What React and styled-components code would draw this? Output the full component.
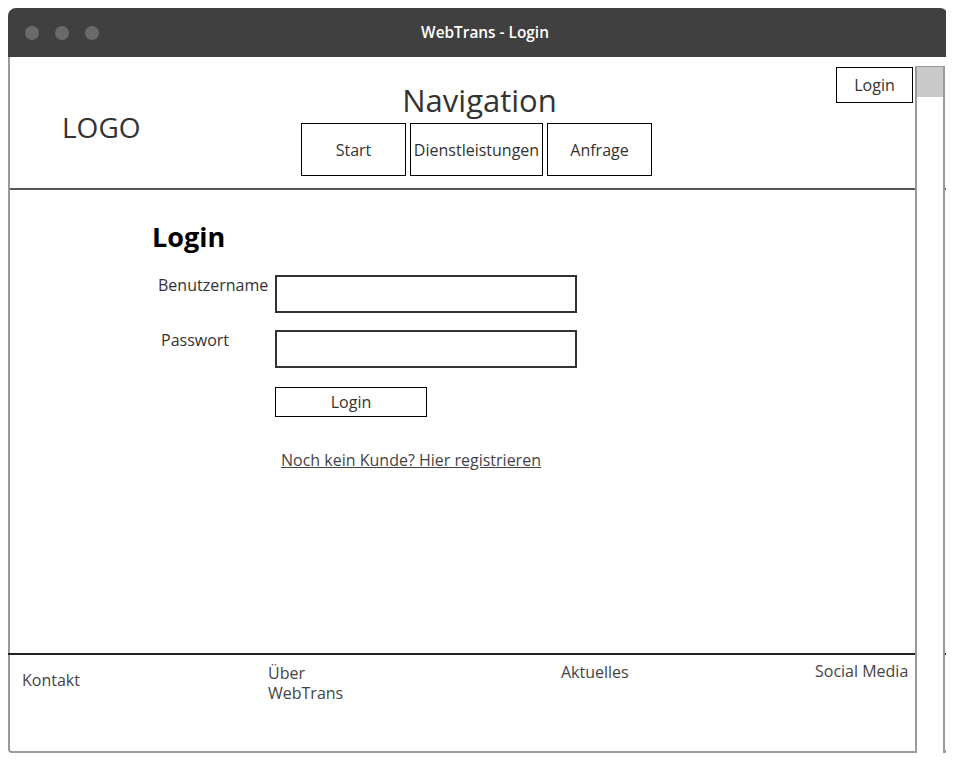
import styled, { createGlobalStyle } from "styled-components";

const GlobalStyle = createGlobalStyle`
  body {
    margin: 8px;
    background: #fff;
    font-family: "Open Sans", "Liberation Sans", sans-serif;
    color: #333;
  }
`;

const Window = styled.div`
  width: 940px;
  height: 745px;
  display: flex;
  flex-direction: column;
`;

const TitleBar = styled.div`
  height: 49px;
  background: #404040;
  border-radius: 8px 8px 0 0;
  display: flex;
  align-items: center;
  position: relative;
`;

const Dots = styled.div`
  display: flex;
  gap: 16px;
  padding-left: 17px;
  position: absolute;
  left: 0;
`;

const Dot = styled.span`
  width: 14px;
  height: 14px;
  border-radius: 50%;
  background: #6a6a6a;
`;

const Title = styled.div`
  flex: 1;
  text-align: center;
  color: #fff;
  font-size: 15.4px;
  font-weight: 600;
  padding-left: 14px;
`;

const Frame = styled.div`
  flex: 1;
  position: relative;
  border: 2px solid #9a9a9a;
  border-top: none;
  border-radius: 0 0 4px 4px;
  display: flex;
  flex-direction: column;
`;

const Header = styled.header`
  height: 131px;
  border-bottom: 2px solid #555;
  display: grid;
  grid-template-columns: 291px 351px 1fr;
`;

const Logo = styled.div`
  font-size: 28px;
  padding-left: 52px;
  padding-top: 8px;
  display: flex;
  align-items: center;
  color: #333;
`;

const NavArea = styled.nav`
  display: flex;
  flex-direction: column;
  align-items: center;
  padding-top: 23px;
`;

const NavTitle = styled.div`
  font-size: 31px;
  line-height: 40px;
  padding-left: 6px;
  color: #333;
`;

const NavButtons = styled.div`
  display: flex;
  gap: 4px;
  margin-top: 3px;
`;

const NavButton = styled.div`
  width: ${(p) => p.$w}px;
  height: 53px;
  box-sizing: border-box;
  border: 1px solid #000;
  display: flex;
  align-items: center;
  justify-content: center;
  font-size: 16px;
  color: #333;
  white-space: nowrap;
`;

const TopRight = styled.div`
  display: flex;
  justify-content: flex-end;
  align-items: flex-start;
  padding: 10px 33px 0 0;
`;

const TopLogin = styled.div`
  width: 77px;
  height: 36px;
  box-sizing: border-box;
  border: 1px solid #000;
  display: flex;
  align-items: center;
  justify-content: center;
  font-size: 16px;
  color: #333;
`;

const Main = styled.main`
  flex: 1;
  padding: 30px 0 0 142px;
`;

const Heading = styled.h1`
  margin: 0;
  font-size: 27px;
  line-height: 34px;
  font-weight: 700;
  color: #000;
`;

const Form = styled.div`
  display: grid;
  grid-template-columns: 123px 302px;
  row-gap: 17px;
  margin-top: 21px;
`;

const Label = styled.label`
  font-size: 16px;
  line-height: 20px;
  padding-left: ${(p) => p.$indent}px;
  color: #333;
  white-space: nowrap;
`;

const Input = styled.div`
  height: 38px;
  box-sizing: border-box;
  border: 2px solid #333;
`;

const SubmitButton = styled.div`
  grid-column: 2;
  width: 152px;
  height: 30px;
  box-sizing: border-box;
  border: 1px solid #000;
  display: flex;
  align-items: center;
  justify-content: center;
  font-size: 16px;
  color: #333;
  margin-top: 2px;
`;

const RegisterLink = styled.a`
  grid-column: 2;
  font-size: 16px;
  line-height: 20px;
  color: #444;
  text-decoration: underline;
  padding-left: 6px;
  margin-top: 16px;
  white-space: nowrap;
`;

const Footer = styled.footer`
  height: 96px;
  border-top: 2px solid #222;
  margin-left: -4px;
  display: grid;
  grid-template-columns: 246px 293px 254px 1fr;
  padding-left: 16px;
`;

const FooterItem = styled.div`
  font-size: 16px;
  line-height: 20px;
  color: #444;
  white-space: nowrap;
  padding-top: ${(p) => p.$top}px;
`;

const Scrollbar = styled.div`
  position: absolute;
  left: 905px;
  top: 9px;
  width: 30px;
  height: 694px;
  box-sizing: border-box;
  border: 1px solid #999;
  border-width: 1px 2px;
  background: #fff;
  z-index: 1;
`;

const Thumb = styled.div`
  height: 30px;
  background: #cacaca;
`;

export default function App() {
  return (
    <>
      <GlobalStyle />
      <Window>
        <TitleBar>
          <Dots>
            <Dot />
            <Dot />
            <Dot />
          </Dots>
          <Title>WebTrans - Login</Title>
        </TitleBar>
        <Frame>
          <Header>
            <Logo>LOGO</Logo>
            <NavArea>
              <NavTitle>Navigation</NavTitle>
              <NavButtons>
                <NavButton $w={105}>Start</NavButton>
                <NavButton $w={133}>Dienstleistungen</NavButton>
                <NavButton $w={105}>Anfrage</NavButton>
              </NavButtons>
            </NavArea>
            <TopRight>
              <TopLogin>Login</TopLogin>
            </TopRight>
          </Header>
          <Main>
            <Heading>Login</Heading>
            <Form>
              <Label $indent={6}>Benutzername</Label>
              <Input />
              <Label $indent={9}>Passwort</Label>
              <Input />
              <SubmitButton>Login</SubmitButton>
              <RegisterLink>Noch kein Kunde? Hier registrieren</RegisterLink>
            </Form>
          </Main>
          <Footer>
            <FooterItem $top={15}>Kontakt</FooterItem>
            <FooterItem $top={8}>
              Über
              <br />
              WebTrans
            </FooterItem>
            <FooterItem $top={7}>Aktuelles</FooterItem>
            <FooterItem $top={6}>Social Media</FooterItem>
          </Footer>
          <Scrollbar>
            <Thumb />
          </Scrollbar>
        </Frame>
      </Window>
    </>
  );
}
